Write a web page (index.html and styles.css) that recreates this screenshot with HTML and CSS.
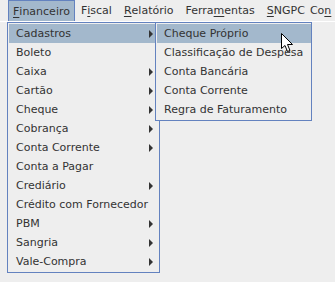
FILE: index.html
```html
<!DOCTYPE html>
<html>
<head>
<meta charset="utf-8">
<link rel="stylesheet" href="styles.css">
</head>
<body>
<div class="screen">
  <div class="menubar">
    <div class="lead"></div>
    <div class="mitem sel"><u>F</u>inanceiro</div>
    <div class="mitem">F<u>i</u>scal</div>
    <div class="mitem"><u>R</u>elatório</div>
    <div class="mitem">Ferra<u>m</u>entas</div>
    <div class="mitem tight"><u>S</u>NGPC</div>
    <div class="mitem last">Co<u>n</u></div>
  </div>
  <div class="popup main">
    <div class="item hl">Cadastros<span class="arrow"></span></div>
    <div class="item">Boleto</div>
    <div class="item">Caixa<span class="arrow"></span></div>
    <div class="item">Cartão<span class="arrow"></span></div>
    <div class="item">Cheque<span class="arrow"></span></div>
    <div class="item">Cobrança<span class="arrow"></span></div>
    <div class="item">Conta Corrente<span class="arrow"></span></div>
    <div class="item">Conta a Pagar</div>
    <div class="item">Crediário<span class="arrow"></span></div>
    <div class="item">Crédito com Fornecedor</div>
    <div class="item">PBM<span class="arrow"></span></div>
    <div class="item">Sangria<span class="arrow"></span></div>
    <div class="item">Vale-Compra<span class="arrow"></span></div>
  </div>
  <div class="popup sub">
    <div class="item hl">Cheque Próprio</div>
    <div class="item">Classificação de Despesa</div>
    <div class="item">Conta Bancária</div>
    <div class="item">Conta Corrente</div>
    <div class="item">Regra de Faturamento</div>
  </div>
  <svg class="cursor" width="13" height="20" viewBox="0 0 13 20">
    <path d="M0.5 0.5 L0.5 15.5 L4 12.5 L6.5 18.5 L9 17.5 L6.5 11.5 L11.5 11.5 Z" fill="#fff" stroke="#000" stroke-width="1"/>
  </svg>
</div>
</body>
</html>
```
FILE: styles.css
```css
html, body {
  margin: 0;
  padding: 0;
}
body {
  background: #eeeeee;
  font-family: "DejaVu Sans", sans-serif;
  font-size: 11px;
  color: #333333;
}
.screen {
  position: relative;
  width: 335px;
  height: 282px;
  overflow: hidden;
  background: #eeeeee;
}
.menubar {
  display: flex;
  height: 21px;
  border-bottom: 1px solid #ffffff;
  white-space: nowrap;
}
.lead {
  width: 8px;
  flex: none;
}
.mitem {
  display: flex;
  align-items: center;
  padding: 0 6px;
  height: 21px;
  flex: none;
}
.mitem.tight {
  padding-right: 0;
  margin-right: -1px;
}
.mitem.last {
  padding-right: 0;
}
.mitem u {
  text-decoration: underline;
  text-underline-offset: 2px;
}
.mitem.sel {
  background: #a3b8cc;
  border-left: 1px solid #6382bf;
  border-right: 1px solid #6382bf;
  border-top: 1px solid #6382bf;
  box-sizing: border-box;
  padding: 0 4px 0 4px;
}
.popup {
  position: absolute;
  top: 22px;
  background: #eeeeee;
  border: 1px solid #6382bf;
  padding: 1px 0 1px 1px;
  box-sizing: border-box;
}
.main {
  left: 7px;
  width: 153px;
  height: 251px;
}
.sub {
  left: 155px;
  width: 157px;
  height: 99px;
}
.item {
  position: relative;
  height: 19px;
  line-height: 19px;
  padding-left: 7px;
  white-space: nowrap;
}
.item.hl {
  background: #a3b8cc;
}
.arrow {
  position: absolute;
  right: 6px;
  top: 6px;
  width: 0;
  height: 0;
  border-top: 4px solid transparent;
  border-bottom: 4px solid transparent;
  border-left: 4px solid #333333;
}
.cursor {
  position: absolute;
  left: 281px;
  top: 33px;
}
```
